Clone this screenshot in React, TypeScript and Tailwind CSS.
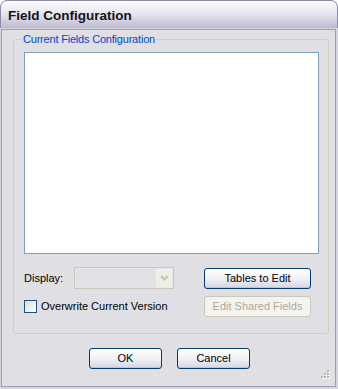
const font = "font-['Liberation_Sans',Arial,sans-serif]";

const XpButton = ({ label, disabled = false, className = "" }: { label: string; disabled?: boolean; className?: string }) => (
  <button
    type="button"
    disabled={disabled}
    className={
      disabled
        ? `flex h-[21px] items-center justify-center rounded-[3px] border border-[#cac8bb] bg-[#f4f3ee] text-[11px] text-[#aca899] ${className}`
        : `flex h-[21px] items-center justify-center rounded-[3px] border border-[#003c74] bg-gradient-to-b from-white via-[#f1f1f5] to-[#d6d5e2] text-[11px] text-black shadow-[inset_0_-1px_0_#c3c2d4] ${className}`
    }
  >
    {label}
  </button>
);

const ComboBox = () => (
  <div className="flex h-[22px] w-[100px] items-stretch border border-[#cac8bb] bg-[#e6e5e8] p-[1px]">
    <div className="flex-1 bg-[#e2e1e5]" />
    <div className="flex w-[16px] items-center justify-center border border-[#f2f1ea] bg-[#eeede6]">
      <svg width="9" height="6" viewBox="0 0 9 6">
        <path d="M1 1 L4.5 4.5 L8 1" fill="none" stroke="#c5c2b2" strokeWidth="2" />
      </svg>
    </div>
  </div>
);

const Checkbox = () => (
  <div className="h-[13px] w-[13px] shrink-0 border border-[#1c5180] bg-gradient-to-br from-[#dcdcd7] via-[#f0f0ea] to-white" />
);

const ResizeGrip = () => (
  <svg className="absolute bottom-[4px] right-[5px]" width="12" height="12" viewBox="0 0 12 12">
    {[
      [9, 0],
      [6, 3],
      [9, 3],
      [3, 6],
      [6, 6],
      [9, 6],
    ].map(([x, y]) => (
      <g key={`${x}-${y}`}>
        <rect x={x + 1} y={y + 1} width="2" height="2" fill="#ffffff" />
        <rect x={x} y={y} width="2" height="2" fill="#b8b49f" />
      </g>
    ))}
  </svg>
);

export default function App() {
  return (
    <div className={`relative flex h-[389px] w-[338px] flex-col overflow-hidden rounded-t-[8px] bg-[#7a7a96] ${font}`}>
      <div className="flex h-[28px] shrink-0 items-center rounded-t-[7px] border-x border-t border-[#8b8ba5] bg-gradient-to-b from-[#fdfdfe] via-[#e4e3ec] to-[#bcbbcf] pl-[7px] pt-[3px]">
        <span className="text-[13.5px] font-bold text-[#141414]">Field Configuration</span>
      </div>
      <div className="flex flex-1 flex-col bg-[#d6d5e0] pb-[2px] pl-[1px] pr-[2px] pt-[1px]">
        <div className="relative flex flex-1 flex-col border border-[#9d9cb4] bg-[#e0dfe3]">
          <fieldset className="ml-[11px] mr-[6px] mt-[3px] flex h-[301px] flex-col rounded-[3px] border border-[#d0d0bf] px-0">
            <legend className="ml-[8px] px-[1px] text-[11px] leading-[13px] tracking-[-0.2px] text-[#0046d5]">
              Current Fields Configuration
            </legend>
            <div className="flex flex-col pl-[10px]">
              <div className="mt-[6px] h-[202px] w-[295px] border border-[#7f9db9] bg-white" />
              <div className="mt-[13px] flex items-center">
                <div className="flex w-[180px] items-center">
                  <span className="w-[50px] text-[11px] text-black">Display:</span>
                  <ComboBox />
                </div>
                <XpButton label="Tables to Edit" className="w-[107px]" />
              </div>
              <div className="mt-[7px] flex items-center">
                <div className="flex w-[180px] items-center">
                  <Checkbox />
                  <span className="ml-[4px] text-[11px] text-black">Overwrite Current Version</span>
                </div>
                <XpButton label="Edit Shared Fields" disabled className="w-[107px]" />
              </div>
            </div>
          </fieldset>
          <div className="mt-[14px] flex justify-center gap-[15px] pl-[2px]">
            <XpButton label="OK" className="w-[73px]" />
            <XpButton label="Cancel" className="w-[73px]" />
          </div>
          <ResizeGrip />
        </div>
      </div>
    </div>
  );
}
